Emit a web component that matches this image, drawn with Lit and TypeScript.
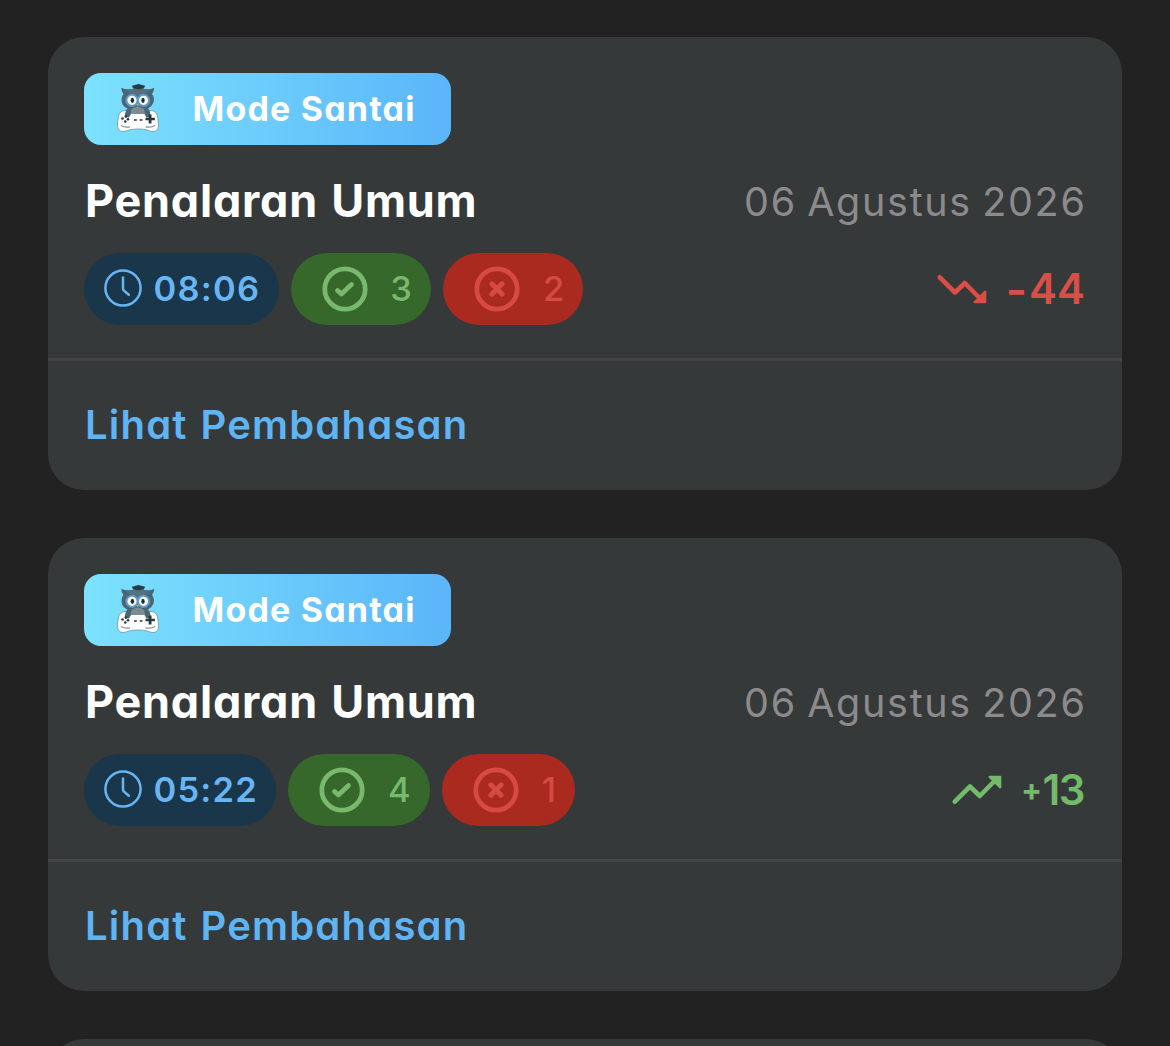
// app.ts
// Quiz history list with result cards

import { LitElement, html, css, svg, nothing } from "lit";
import { customElement, property } from "lit/decorators.js";

interface QuizResult {
  mode: string;
  title: string;
  date: string;
  duration: string;
  correct: number;
  wrong: number;
  score: number;
}

const RESULTS: QuizResult[] = [
  {
    mode: "Mode Santai",
    title: "Penalaran Umum",
    date: "06 Agustus 2026",
    duration: "08:06",
    correct: 3,
    wrong: 2,
    score: -44,
  },
  {
    mode: "Mode Santai",
    title: "Penalaran Umum",
    date: "06 Agustus 2026",
    duration: "05:22",
    correct: 4,
    wrong: 1,
    score: 13,
  },
];

const owlIcon = html`
  <svg class="owl" viewBox="0 0 42 48">
    <path
      d="M8 26.5Q21 25 34 26.5Q39.500 27 40.500 32L41.600 40Q42 47.500 36 47.500Q33 47.500 30 46Q27.500 45 21 45Q14.500 45 12 46Q9 47.500 6 47.500Q0 47.500 .4 40L1.500 32Q2.500 27 8 26.500Z"
      fill="#fff"
      stroke="#6796ab"
      stroke-width=".8"
    />
    <path
      d="M4.300 3.800Q9 6 15 5H27Q33 6 37.200 3.800Q37.200 7.500 35 10Q37.800 13.500 36.500 18.500Q35 22.500 31 24.500Q34 28 33.500 33L29.500 33.500L27.500 30H14L12 33.500L8 33Q7.500 28 10.500 24.500Q6 22.500 4.800 18.500Q3.800 13.500 6.500 10Q4.300 7.500 4.300 3.800Z"
      fill="#4c6575"
    />
    <path d="M8 6L20.800 14L34 6Q27 4.500 20.800 5Q14 4.500 8 6Z" fill="#57707f" />
    <path d="M14.500 25Q20.800 20.500 27 25L28 30H13.500Z" fill="#7d8b94" />
    <path d="M15 1.800L21.500 0L28 1.800L27 4.600Q21.500 6 16 4.600Z" fill="#263b45" />
    <circle cx="15" cy="16.300" r="5.600" fill="#f4f9fb" stroke="#5f9ac6" stroke-width="2" />
    <circle cx="26.500" cy="16.300" r="5.600" fill="#f4f9fb" stroke="#5f9ac6" stroke-width="2" />
    <ellipse cx="15.400" cy="16.300" rx="1.700" ry="2.600" fill="#202c34" />
    <ellipse cx="26" cy="16.300" rx="1.700" ry="2.600" fill="#202c34" />
    <path d="M19.300 20H22.200L20.700 23Z" fill="#b6a967" />
    <g fill="#29383f">
      <circle cx="5.500" cy="34.500" r="1.300" />
      <circle cx="8.800" cy="32.600" r="1.300" />
      <circle cx="11" cy="35.200" r="1.300" />
      <circle cx="8.300" cy="37.500" r="1.300" />
      <path d="M17 35.300H19.800V36.700H17ZM22.700 35.300H25.500V36.700H22.700Z" />
      <path d="M31.700 30.500H34.500V33.700H37.900V36.300H34.500V39.500H31.700V36.300H28.500V33.700H31.700Z" />
    </g>
    <path
      d="M4 41.500Q8 44 13 42.800M28.500 42.800Q34 44 38 41.500"
      fill="none"
      stroke="#82959e"
      stroke-width="1.300"
    />
  </svg>
`;

const clockIcon = html`
  <svg class="clock" viewBox="0 0 38 38" fill="none" stroke="currentColor" stroke-width="2.500">
    <circle cx="19" cy="19" r="17.600" />
    <path d="M19 8.500V19.500Q19 20.700 20 21.600L24.800 25.800" stroke-linecap="round" stroke-linejoin="round" />
  </svg>
`;

const ringIcon = (mark: unknown) => html`
  <svg class="ring" viewBox="0 0 46 46" fill="none" stroke="currentColor">
    <circle cx="23" cy="23" r="20.200" stroke-width="4.800" />
    ${mark}
  </svg>
`;

const checkMark = svg`
  <path d="M15.500 24.500L19.400 28L29.500 18.500" stroke-width="4.800" stroke-linecap="round" stroke-linejoin="round" />
`;

const crossMark = svg`
  <path d="M17.800 17.800L28.200 28.200M28.200 17.800L17.800 28.200" stroke-width="5" stroke-linecap="round" />
`;

const trendIcon = (up: boolean) => html`
  <svg class="trend" viewBox="0 0 50 30" fill="currentColor">
    <g transform=${up ? nothing : "matrix(1 0 0 -1 0 30)"}>
      <path
        d="M2.800 26.700L18 11.500L27.800 21L42 6.500"
        fill="none"
        stroke="currentColor"
        stroke-width="4.600"
        stroke-linecap="round"
        stroke-linejoin="round"
      />
      <path d="M37.300 .7H48.200Q49.300 .7 49.300 1.800V12.600Q48.500 14 47.200 13L36.700 2.500Q36 1.300 37.300 .7Z" />
    </g>
  </svg>
`;

@customElement("result-card")
export class ResultCard extends LitElement {
  @property({ attribute: false }) result: QuizResult | null = null;

  static styles = css`
    :host {
      display: block;
      height: 453px;
      flex: none;
      border-radius: 36px;
      background: #36393a;
      overflow: hidden;
    }

    svg {
      display: block;
      flex: none;
    }

    .body {
      box-sizing: border-box;
      height: 321px;
      padding: 36px 36px 0;
    }

    .mode {
      display: flex;
      align-items: center;
      box-sizing: border-box;
      width: 367px;
      height: 72px;
      padding-left: 33px;
      gap: 33.5px;
      border-radius: 17px;
      background: linear-gradient(90deg, #7ce2fd, #5bb5f9);
      color: #fff;
      font-size: 34px;
      font-weight: 660;
      letter-spacing: 1.2px;
    }

    .owl {
      width: 42px;
      height: 48px;
      margin-bottom: 2px;
    }

    .row {
      display: flex;
      align-items: center;
      justify-content: space-between;
    }

    .heading {
      height: 60px;
      margin: 25px 1px 23px 1px;
    }

    .title {
      color: #fff;
      font-size: 45px;
      font-weight: 670;
      letter-spacing: 0.75px;
      word-spacing: 2px;
    }

    .date {
      color: #8c8a8b;
      font-size: 39.5px;
      letter-spacing: 1.7px;
      word-spacing: -2.5px;
      margin-right: -1.6px;
      padding-top: 5px;
    }

    .chips {
      display: flex;
      gap: 12px;
    }

    .chip {
      display: flex;
      align-items: center;
      box-sizing: border-box;
      height: 72px;
      border-radius: 36px;
      font-size: 34.5px;
      font-weight: 550;
      letter-spacing: 1.2px;
    }

    .chip.time {
      padding: 0 18.5px 0 20px;
      gap: 11.5px;
      background: #1a364b;
      color: #68b5f3;
      font-weight: 620;
    }

    .chip.correct {
      padding: 0 18px 0 31px;
      gap: 22.5px;
      background: #35682a;
      color: #78b96e;
    }

    .chip.wrong {
      padding: 0 17.5px 0 31px;
      gap: 23px;
      background: #aa2a20;
      color: #d74a43;
    }

    .clock {
      width: 38px;
      height: 38px;
      margin-bottom: 2px;
    }

    .ring {
      width: 46px;
      height: 46px;
    }

    .score {
      display: flex;
      align-items: center;
      margin-right: 1px;
      color: #d94e47;
      font-size: 42px;
      font-weight: 600;
    }

    .score.up {
      color: #73ba6b;
      letter-spacing: -1.5px;
      margin-right: 2px;
    }

    .sign {
      margin: 0 2px 0 19px;
      font-size: 46px;
    }

    .up .sign {
      margin: 0 2px 1px 19px;
      font-size: 31px;
      font-weight: 700;
    }

    .trend {
      width: 50px;
      height: 30px;
    }

    .footer {
      display: flex;
      align-items: center;
      box-sizing: border-box;
      height: 132px;
      padding: 0 37px 2px;
      border-top: 3px solid #444446;
      color: #5fb4f4;
      font-size: 40px;
      font-weight: 640;
      letter-spacing: 1.2px;
      word-spacing: 1.5px;
    }
  `;

  protected render() {
    if (!this.result) return nothing;

    const { mode, title, date, duration, correct, wrong, score } = this.result;
    const up = score > 0;

    return html`
      <div class="body">
        <div class="mode">${owlIcon}<span>${mode}</span></div>
        <div class="row heading">
          <span class="title">${title}</span>
          <span class="date">${date}</span>
        </div>
        <div class="row">
          <div class="chips">
            <div class="chip time">${clockIcon}<span>${duration}</span></div>
            <div class="chip correct">${ringIcon(checkMark)}<span>${correct}</span></div>
            <div class="chip wrong">${ringIcon(crossMark)}<span>${wrong}</span></div>
          </div>
          <div class="score ${up ? "up" : ""}">
            ${trendIcon(up)}<span class="sign">${up ? "+" : "-"}</span><span>${Math.abs(score)}</span>
          </div>
        </div>
      </div>
      <div class="footer"><span>Lihat Pembahasan</span></div>
    `;
  }
}

@customElement("app-root")
export class AppRoot extends LitElement {
  static styles = css`
    :host {
      display: flex;
      flex-direction: column;
      gap: 48px;
      box-sizing: border-box;
      width: 100%;
      height: 1046px;
      padding: 37px 48px 0;
      overflow: hidden;
      background: #222222;
      font-family: Inter, "Liberation Sans", sans-serif;
      font-feature-settings: "cv11";
      line-height: 1;
      white-space: nowrap;
    }
  `;

  protected render() {
    return html`
      ${RESULTS.map((r) => html`<result-card .result=${r}></result-card>`)}
      <result-card></result-card>
    `;
  }
}

declare global {
  interface HTMLElementTagNameMap {
    "app-root": AppRoot;
    "result-card": ResultCard;
  }
}
